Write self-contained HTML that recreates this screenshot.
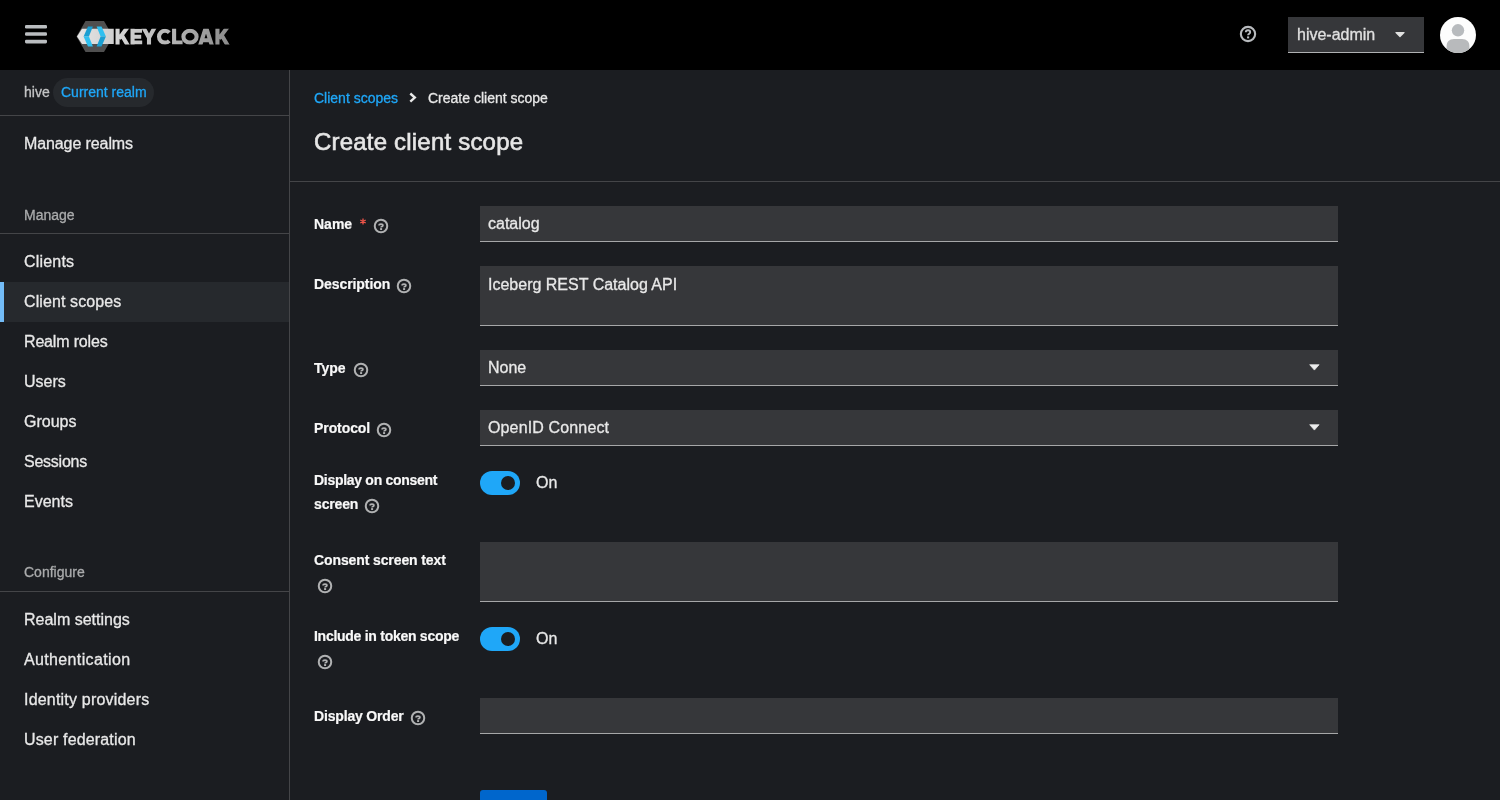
<!DOCTYPE html>
<html><head><meta charset="utf-8">
<style>
*{box-sizing:border-box;margin:0;padding:0}
html,body{width:1500px;height:800px;overflow:hidden;background:#1b1d21;font-family:"Liberation Sans",sans-serif;color:#e8e8e8}
.a{position:absolute;white-space:nowrap;will-change:transform;-webkit-text-stroke:0.3px currentColor}
.t16{font-size:16px;line-height:24px}
.t14{font-size:14px;line-height:20px}
.b{font-weight:700}
#mast{position:absolute;left:0;top:0;width:1500px;height:70px;background:#000}
#side{position:absolute;left:0;top:70px;width:290px;height:730px;background:#1b1d21;border-right:1px solid #444548}
.hr{position:absolute;height:1px;background:#444548}
.inp{position:absolute;left:480px;width:858px;background:#36373a;border-bottom:1px solid #a6a7a8}
.help{position:absolute;width:15px;height:15px}
.tog{position:absolute;left:480px;width:40px;height:24px;border-radius:12px;background:#1fa7f8}
.tog::after{content:"";position:absolute;left:21px;top:5px;width:14px;height:14px;border-radius:50%;background:#1b1d21}
.lab{font-size:14px;line-height:24px;font-weight:700;color:#f8f8f8;-webkit-text-stroke:0.2px currentColor}
.caret{position:absolute;width:10px;height:16px}
</style></head>
<body>
<div id="mast">
  <svg class="a" style="left:25px;top:25px" width="22" height="19" viewBox="0 0 22 19">
    <rect x="0" y="0" width="22" height="3.6" rx="1.3" fill="#babdc0"/>
    <rect x="0" y="7.2" width="22" height="3.6" rx="1.3" fill="#babdc0"/>
    <rect x="0" y="14.8" width="22" height="3.6" rx="1.3" fill="#babdc0"/>
  </svg>
  <svg class="a" style="left:70px;top:15px" width="170" height="45" viewBox="70 15 170 45">
    <defs>
      <linearGradient id="band" x1="0" x2="1" y1="0" y2="0">
        <stop offset="0" stop-color="#e6e6e6"/><stop offset="1" stop-color="#cfcfcf"/>
      </linearGradient>
      <linearGradient id="txt" gradientUnits="userSpaceOnUse" x1="115" x2="229" y1="0" y2="0">
        <stop offset="0" stop-color="#d6d6d6"/><stop offset="0.5" stop-color="#b4b4b4"/><stop offset="1" stop-color="#8c8c8c"/>
      </linearGradient>
      <clipPath id="capclip"><rect x="114" y="28.75" width="117" height="15.85"/></clipPath>
    </defs>
    <polygon points="85.5,21 104,21 113,36.5 104,52 85.5,52 76.5,36.5" fill="#4f4f4f"/>
    <polygon points="82,28.75 113.75,28.75 113.75,44 82,44 77,36.5" fill="url(#band)"/>
    <polygon points="88,26.4 92.9,26.4 88.9,36.5 83.6,36.5" fill="#1b9fd2"/>
    <polygon points="83.6,36.5 88.9,36.5 92.9,46.6 88,46.6" fill="#2fc0f0"/>
    <polygon points="96.6,26.4 101.5,26.4 105.9,36.5 100.6,36.5" fill="#2fc0f0"/>
    <polygon points="100.6,36.5 105.9,36.5 101.5,46.6 96.6,46.6" fill="#1b9fd2"/>
    <g stroke="url(#txt)" stroke-width="4.1" fill="none" stroke-linejoin="miter" stroke-linecap="butt" clip-path="url(#capclip)">
      <path d="M117.55,26 V47 M128.1,26.5 L119.1,38.6 M121.8,35.2 L128.7,47"/>
      <path d="M132.55,26 V47 M132,30.8 H142 M132,36.7 H141.2 M132,42.55 H142.2"/>
      <path d="M142.6,26 L149,37.8 L155.4,26 M149,37 V47"/>
      <path d="M169.3,32.6 A5.95,5.95 0 1 0 169.3,40.8"/>
      <path d="M174.1,26 V42.55 H182.6"/>
      <ellipse cx="190" cy="36.7" rx="6.6" ry="5.9"/>
      <path d="M199.6,47 L206,27 L212.4,47 M202,40.3 H210"/>
      <path d="M217.45000000000002,26 V47 M228.0,26.5 L219.0,38.6 M221.70000000000002,35.2 L228.6,47"/>
    </g>
  </svg>
  <svg class="help" style="left:1239px;top:25px;width:18px;height:18px" viewBox="0 0 18 18"><circle cx="9" cy="9" r="7.15" fill="none" stroke="#b8bbbe" stroke-width="2.1"/><path d="M6.8,7.3 C6.8,6.1 7.8,5.3 9,5.3 C10.3,5.3 11.2,6.1 11.2,7.2 C11.2,8.6 9.1,8.7 9.1,10.2" fill="none" stroke="#b8bbbe" stroke-width="1.9"/><rect x="8.05" y="11.4" width="2.1" height="2" fill="#b8bbbe"/></svg>
  <div class="a" style="left:1288px;top:17px;width:136px;height:36px;background:#36373a;border-bottom:1px solid #b0b1b3"></div>
  <div class="a t16" style="left:1297px;top:23px;color:#e0e0e0">hive-admin</div>
  <svg class="caret" style="left:1395px;top:26px" viewBox="0 0 320 512"><path fill="#e0e0e0" d="M31.3 192h257.3c17.8 0 26.7 21.5 14.1 34.1L174.1 354.8c-7.8 7.8-20.5 7.8-28.3 0L17.2 226.1C4.6 213.5 13.5 192 31.3 192z"/></svg>
  <svg class="a" style="left:1440px;top:17px" width="36" height="36" viewBox="0 0 36 36">
    <defs><clipPath id="cc"><circle cx="18" cy="18" r="18"/></clipPath></defs>
    <circle cx="18" cy="18" r="18" fill="#fdfdfd"/>
    <g clip-path="url(#cc)">
      <circle cx="18" cy="13.3" r="6.2" fill="#b8bbbe"/>
      <path d="M6.6,36 L6.6,29.5 C6.6,24.8 9.2,22 14,22 L22,22 C26.8,22 29.4,24.8 29.4,29.5 L29.4,36 Z" fill="#b8babc"/>
    </g>
  </svg>
</div>

<div id="side"></div>
<div class="a t14" style="left:24px;top:82px;color:#c3c4c5">hive</div>
<div class="a" style="left:53px;top:78px;width:101px;height:29px;border-radius:15px;background:#26292d"></div>
<div class="a t14" style="left:61px;top:82px;color:#1fa7f8">Current realm</div>
<div class="hr" style="left:0;top:115px;width:289px"></div>
<div class="a t16" style="left:24px;top:131.5px;letter-spacing:-0.1px">Manage realms</div>
<div class="a t14" style="left:24px;top:204.5px;color:#aaabac">Manage</div>
<div class="hr" style="left:0;top:233px;width:289px"></div>
<div class="a" style="left:0;top:282px;width:289px;height:40px;background:#26292d"></div>
<div class="a" style="left:0;top:282px;width:4px;height:40px;background:#73bcf7"></div>
<div class="a t16" style="left:24px;top:249.7px;letter-spacing:0.2px">Clients</div>
<div class="a t16" style="left:24px;top:289.7px;letter-spacing:0.1px">Client scopes</div>
<div class="a t16" style="left:24px;top:329.7px;letter-spacing:-0.17px">Realm roles</div>
<div class="a t16" style="left:24px;top:369.7px">Users</div>
<div class="a t16" style="left:24px;top:409.7px">Groups</div>
<div class="a t16" style="left:24px;top:449.7px;letter-spacing:-0.25px">Sessions</div>
<div class="a t16" style="left:24px;top:489.7px">Events</div>
<div class="a t14" style="left:24px;top:562px;color:#aaabac">Configure</div>
<div class="hr" style="left:0;top:591px;width:289px"></div>
<div class="a t16" style="left:24px;top:607.5px">Realm settings</div>
<div class="a t16" style="left:24px;top:647.5px;letter-spacing:0.36px">Authentication</div>
<div class="a t16" style="left:24px;top:687.5px;letter-spacing:0.2px">Identity providers</div>
<div class="a t16" style="left:24px;top:727.5px;letter-spacing:0.16px">User federation</div>

<div class="a t14" style="left:314px;top:87.8px;color:#1fa7f8">Client scopes</div>
<svg class="a" style="left:408px;top:92.4px" width="10" height="11" viewBox="0 0 10 11"><path d="M2.3,1.5 L6.8,5.6 L2.3,9.7" stroke="#e8e8e8" stroke-width="2.4" fill="none"/></svg>
<div class="a t14" style="left:428px;top:87.8px">Create client scope</div>
<div class="a" style="left:314px;top:126.9px;font-size:24px;line-height:30px;letter-spacing:0.2px;-webkit-text-stroke:0.6px currentColor;color:#e6e6e6">Create client scope</div>
<div class="hr" style="left:290px;top:181px;width:1210px"></div>
<div class="inp" style="top:206px;height:36px"></div>
<div class="inp" style="top:266px;height:60px"></div>
<div class="inp" style="top:350px;height:36px"></div>
<div class="inp" style="top:410px;height:36px"></div>
<div class="inp" style="top:542px;height:60px"></div>
<div class="inp" style="top:698px;height:36px"></div>
<div class="a t16" style="left:488px;top:211.5px">catalog</div>
<div class="a t16" style="left:488px;top:272.8px">Iceberg REST Catalog API</div>
<div class="a t16" style="left:488px;top:355.9px">None</div>
<div class="a t16" style="left:488px;top:416.4px;letter-spacing:0.14px">OpenID Connect</div>
<svg class="a" style="left:1308.5px;top:364.0px" width="11" height="7" viewBox="0 0 11 7"><path d="M0.7,0.7 L10.1,0.7 L5.4,6.1 Z" fill="#ececec" stroke="#ececec" stroke-width="0.7" stroke-linejoin="round"/></svg>

<svg class="a" style="left:1308.5px;top:424.0px" width="11" height="7" viewBox="0 0 11 7"><path d="M0.7,0.7 L10.1,0.7 L5.4,6.1 Z" fill="#ececec" stroke="#ececec" stroke-width="0.7" stroke-linejoin="round"/></svg>

<div class="tog" style="top:471px"></div><div class="a t16" style="left:536px;top:471px">On</div>
<div class="tog" style="top:627px"></div><div class="a t16" style="left:536px;top:627px">On</div>
<div class="a lab" style="left:314px;top:211.6px">Name</div>
<svg class="a" style="left:359px;top:218px" width="8" height="8" viewBox="0 0 8 8"><path d="M4,0.4 V6.6 M1.3,1.95 L6.7,5.05 M1.3,5.05 L6.7,1.95" stroke="#f0554a" stroke-width="1.3"/></svg>
<div class="a lab" style="left:314px;top:271.6px;letter-spacing:-0.08px">Description</div>
<div class="a lab" style="left:314px;top:356.4px">Type</div>
<div class="a lab" style="left:314px;top:415.9px;letter-spacing:-0.08px">Protocol</div>
<div class="a lab" style="left:314px;top:468.2px;letter-spacing:-0.29px">Display on consent</div>
<div class="a lab" style="left:314px;top:492.2px;letter-spacing:-0.15px">screen</div>
<div class="a lab" style="left:314px;top:548px;letter-spacing:-0.11px">Consent screen text</div>
<div class="a lab" style="left:314px;top:624.0px;letter-spacing:-0.27px">Include in token scope</div>
<div class="a lab" style="left:314px;top:704.4px;letter-spacing:-0.17px">Display Order</div>
<svg class="help" style="left:372.9px;top:217.9px;width:16px;height:16px" viewBox="0 0 16 16"><circle cx="8" cy="8" r="6.25" fill="none" stroke="#b0b1b2" stroke-width="2.0"/><path d="M6.1,7.5 C6.1,6.5 6.9,6.0 8,6.0 C9.1,6.0 9.9,6.5 9.9,7.4 C9.9,8.5 8.1,8.6 8.1,9.5" fill="none" stroke="#b0b1b2" stroke-width="1.75"/><rect x="7.1" y="10.1" width="2" height="1.9" fill="#b0b1b2"/></svg>

<svg class="help" style="left:395.9px;top:277.9px;width:16px;height:16px" viewBox="0 0 16 16"><circle cx="8" cy="8" r="6.25" fill="none" stroke="#b0b1b2" stroke-width="2.0"/><path d="M6.1,7.5 C6.1,6.5 6.9,6.0 8,6.0 C9.1,6.0 9.9,6.5 9.9,7.4 C9.9,8.5 8.1,8.6 8.1,9.5" fill="none" stroke="#b0b1b2" stroke-width="1.75"/><rect x="7.1" y="10.1" width="2" height="1.9" fill="#b0b1b2"/></svg>

<svg class="help" style="left:352.9px;top:361.9px;width:16px;height:16px" viewBox="0 0 16 16"><circle cx="8" cy="8" r="6.25" fill="none" stroke="#b0b1b2" stroke-width="2.0"/><path d="M6.1,7.5 C6.1,6.5 6.9,6.0 8,6.0 C9.1,6.0 9.9,6.5 9.9,7.4 C9.9,8.5 8.1,8.6 8.1,9.5" fill="none" stroke="#b0b1b2" stroke-width="1.75"/><rect x="7.1" y="10.1" width="2" height="1.9" fill="#b0b1b2"/></svg>

<svg class="help" style="left:375.9px;top:421.9px;width:16px;height:16px" viewBox="0 0 16 16"><circle cx="8" cy="8" r="6.25" fill="none" stroke="#b0b1b2" stroke-width="2.0"/><path d="M6.1,7.5 C6.1,6.5 6.9,6.0 8,6.0 C9.1,6.0 9.9,6.5 9.9,7.4 C9.9,8.5 8.1,8.6 8.1,9.5" fill="none" stroke="#b0b1b2" stroke-width="1.75"/><rect x="7.1" y="10.1" width="2" height="1.9" fill="#b0b1b2"/></svg>

<svg class="help" style="left:363.9px;top:497.9px;width:16px;height:16px" viewBox="0 0 16 16"><circle cx="8" cy="8" r="6.25" fill="none" stroke="#b0b1b2" stroke-width="2.0"/><path d="M6.1,7.5 C6.1,6.5 6.9,6.0 8,6.0 C9.1,6.0 9.9,6.5 9.9,7.4 C9.9,8.5 8.1,8.6 8.1,9.5" fill="none" stroke="#b0b1b2" stroke-width="1.75"/><rect x="7.1" y="10.1" width="2" height="1.9" fill="#b0b1b2"/></svg>

<svg class="help" style="left:316.9px;top:577.9px;width:16px;height:16px" viewBox="0 0 16 16"><circle cx="8" cy="8" r="6.25" fill="none" stroke="#b0b1b2" stroke-width="2.0"/><path d="M6.1,7.5 C6.1,6.5 6.9,6.0 8,6.0 C9.1,6.0 9.9,6.5 9.9,7.4 C9.9,8.5 8.1,8.6 8.1,9.5" fill="none" stroke="#b0b1b2" stroke-width="1.75"/><rect x="7.1" y="10.1" width="2" height="1.9" fill="#b0b1b2"/></svg>

<svg class="help" style="left:316.9px;top:653.9px;width:16px;height:16px" viewBox="0 0 16 16"><circle cx="8" cy="8" r="6.25" fill="none" stroke="#b0b1b2" stroke-width="2.0"/><path d="M6.1,7.5 C6.1,6.5 6.9,6.0 8,6.0 C9.1,6.0 9.9,6.5 9.9,7.4 C9.9,8.5 8.1,8.6 8.1,9.5" fill="none" stroke="#b0b1b2" stroke-width="1.75"/><rect x="7.1" y="10.1" width="2" height="1.9" fill="#b0b1b2"/></svg>

<svg class="help" style="left:409.9px;top:709.9px;width:16px;height:16px" viewBox="0 0 16 16"><circle cx="8" cy="8" r="6.25" fill="none" stroke="#b0b1b2" stroke-width="2.0"/><path d="M6.1,7.5 C6.1,6.5 6.9,6.0 8,6.0 C9.1,6.0 9.9,6.5 9.9,7.4 C9.9,8.5 8.1,8.6 8.1,9.5" fill="none" stroke="#b0b1b2" stroke-width="1.75"/><rect x="7.1" y="10.1" width="2" height="1.9" fill="#b0b1b2"/></svg>

<div class="a" style="left:480px;top:790px;width:67px;height:36px;border-radius:3px;background:#0066cc"></div>
</body></html>
